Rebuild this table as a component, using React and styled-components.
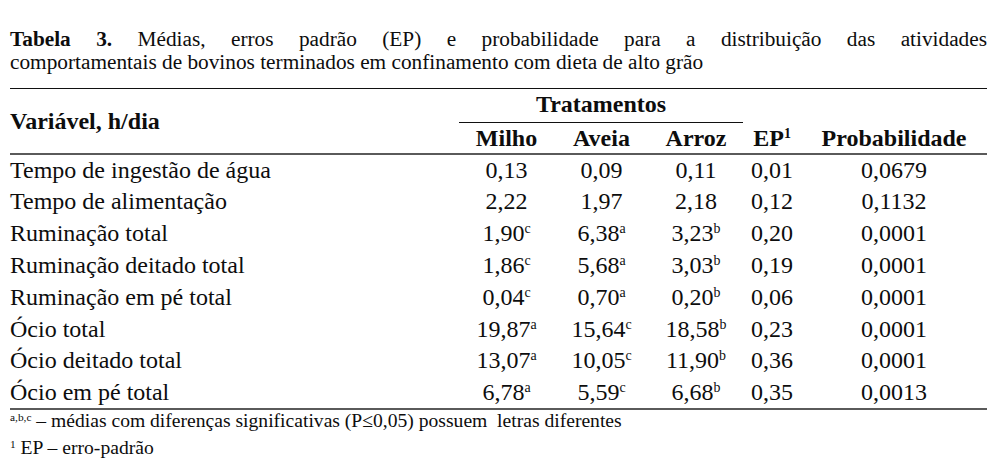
import React from 'react'
import styled, { createGlobalStyle } from 'styled-components'

const serif = `"Liberation Serif", "Times New Roman", serif`

const GlobalStyle = createGlobalStyle`
  html, body {
    margin: 0;
    padding: 0;
    background: #fff;
  }
  body {
    font-family: ${serif};
    color: #0d0d0d;
  }
`

const rows = [
  { label: 'Tempo de ingestão de água', milho: ['0,13'], aveia: ['0,09'], arroz: ['0,11'], ep: '0,01', p: '0,0679' },
  { label: 'Tempo de alimentação', milho: ['2,22'], aveia: ['1,97'], arroz: ['2,18'], ep: '0,12', p: '0,1132' },
  { label: 'Ruminação total', milho: ['1,90', 'c'], aveia: ['6,38', 'a'], arroz: ['3,23', 'b'], ep: '0,20', p: '0,0001' },
  { label: 'Ruminação deitado total', milho: ['1,86', 'c'], aveia: ['5,68', 'a'], arroz: ['3,03', 'b'], ep: '0,19', p: '0,0001' },
  { label: 'Ruminação em pé total', milho: ['0,04', 'c'], aveia: ['0,70', 'a'], arroz: ['0,20', 'b'], ep: '0,06', p: '0,0001' },
  { label: 'Ócio total', milho: ['19,87', 'a'], aveia: ['15,64', 'c'], arroz: ['18,58', 'b'], ep: '0,23', p: '0,0001' },
  { label: 'Ócio deitado total', milho: ['13,07', 'a'], aveia: ['10,05', 'c'], arroz: ['11,90', 'b'], ep: '0,36', p: '0,0001' },
  { label: 'Ócio em pé total', milho: ['6,78', 'a'], aveia: ['5,59', 'c'], arroz: ['6,68', 'b'], ep: '0,35', p: '0,0013' },
]

// column widths, px (table is 977 wide)
const widths = [449, 95, 95, 94, 58, 186]

const Mean = ({ value }) => (
  <>
    {value[0]}
    {value[1] && <Sup>{value[1]}</Sup>}
  </>
)

const App = () => (
  <Page>
    <GlobalStyle />
    <Caption>
      <CaptionLine $full>
        <strong>Tabela 3.</strong> Médias, erros padrão (EP) e probabilidade para a distribuição das atividades
      </CaptionLine>
      <CaptionLine>comportamentais de bovinos terminados em confinamento com dieta de alto grão</CaptionLine>
    </Caption>
    <Table>
      <colgroup>
        {widths.map((w, i) => (
          <Col key={i} $w={w} />
        ))}
      </colgroup>
      <thead>
        <TopRow>
          <HeadCell rowSpan={2} $align='left'>Variável, h/dia</HeadCell>
          <GroupCell colSpan={3}>
            <GroupLabel>Tratamentos</GroupLabel>
          </GroupCell>
          <HeadCell />
          <HeadCell />
        </TopRow>
        <SubRow>
          <HeadCell>Milho</HeadCell>
          <HeadCell>Aveia</HeadCell>
          <HeadCell>Arroz</HeadCell>
          <HeadCell>
            EP<Sup>1</Sup>
          </HeadCell>
          <HeadCell>Probabilidade</HeadCell>
        </SubRow>
      </thead>
      <tbody>
        {rows.map((r) => (
          <Row key={r.label}>
            <Cell $align='left'>{r.label}</Cell>
            <Cell><Mean value={r.milho} /></Cell>
            <Cell><Mean value={r.aveia} /></Cell>
            <Cell><Mean value={r.arroz} /></Cell>
            <Cell>{r.ep}</Cell>
            <Cell>{r.p}</Cell>
          </Row>
        ))}
      </tbody>
    </Table>
    <Notes>
      <Note>
        <NoteSup>a,b,c</NoteSup> – médias com diferenças significativas (P≤0,05) possuem&nbsp; letras diferentes
      </Note>
      <Note>
        <NoteSup>1</NoteSup> EP – erro-padrão
      </Note>
    </Notes>
  </Page>
)

const Page = styled.div`
  width: 977px;
  padding: 28px 0 0 10px;
  font-family: ${serif};
`

const Caption = styled.div`
  margin: 0 0 14px;
  font-size: 21.3px;
  line-height: 23px;
  strong {
    font-weight: 700;
  }
`

const CaptionLine = styled.div`
  white-space: nowrap;
  text-align: ${(p) => (p.$full ? 'justify' : 'left')};
  text-align-last: ${(p) => (p.$full ? 'justify' : 'auto')};
`

const Table = styled.table`
  width: 977px;
  border-collapse: collapse;
  table-layout: fixed;
  font-family: ${serif};
  font-size: 24px;
  color: #0d0d0d;
`

const Col = styled.col`
  width: ${(p) => p.$w}px;
`

const TopRow = styled.tr`
  height: 34px;
  border-top: 1px solid #111;
`

const SubRow = styled.tr`
  height: 31px;
  border-bottom: 2px solid #5a5a5a;
`

const HeadCell = styled.th`
  padding: 0;
  font-weight: 700;
  text-align: ${(p) => p.$align || 'center'};
  vertical-align: middle;
  white-space: nowrap;
`

const GroupCell = styled(HeadCell)`
  vertical-align: bottom;
`

const GroupLabel = styled.div`
  height: 33px;
  line-height: 30px;
  border-bottom: 1px solid #111;
`

const Row = styled.tr`
  height: 31.85px;
  &:last-child {
    border-bottom: 2px solid #5a5a5a;
  }
`

const Cell = styled.td`
  padding: 0;
  text-align: ${(p) => p.$align || 'center'};
  vertical-align: middle;
  white-space: nowrap;
`

const Sup = styled.sup`
  font-size: 0.58em;
  line-height: 0;
  vertical-align: 0.55em;
`

const Notes = styled.div`
  display: flex;
  flex-direction: column;
  gap: 5px;
  font-size: 19.6px;
  line-height: 22px;
  color: #0d0d0d;
`

const Note = styled.div``

const NoteSup = styled.sup`
  font-size: 0.58em;
  line-height: 0;
  vertical-align: 0.5em;
`

export default App
